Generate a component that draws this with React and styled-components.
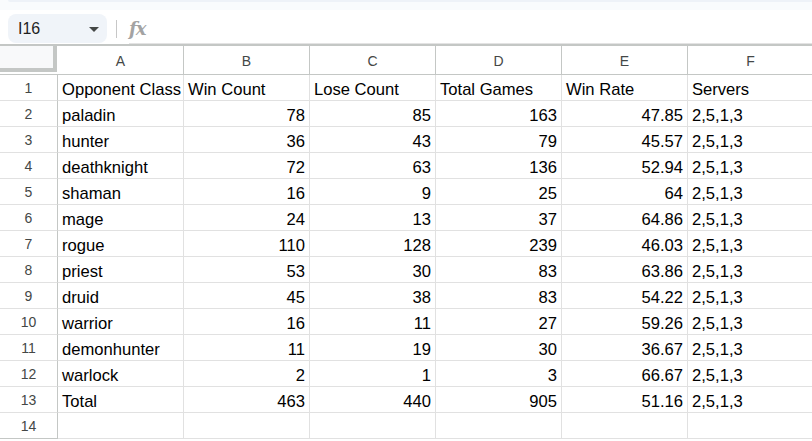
import { Fragment } from "react";
import styled, { createGlobalStyle } from "styled-components";

const GlobalStyle = createGlobalStyle`
  html, body {
    margin: 0;
    padding: 0;
    background: #ffffff;
    overflow: hidden;
  }
  body {
    font-family: "Liberation Sans", Arial, sans-serif;
  }
`;

const Page = styled.div`
  width: 812px;
  height: 441px;
  overflow: hidden;
  background: #ffffff;
  display: flex;
  flex-direction: column;
`;

const TopStrip = styled.div`
  height: 10px;
  background: #f9fbfd;
  padding-left: 8px;
  flex-shrink: 0;
`;

const ToolbarEdge = styled.div`
  height: 2px;
  background: #eef2f8;
  border-bottom-left-radius: 6px;
`;

const FormulaBar = styled.div`
  height: 34px;
  display: flex;
  align-items: flex-start;
  padding-top: 4px;
  box-sizing: border-box;
  flex-shrink: 0;
`;

const NameBox = styled.div`
  margin-left: 8px;
  width: 99px;
  height: 29px;
  border-radius: 8px;
  background: #f0f4f9;
  display: flex;
  align-items: center;
  justify-content: space-between;
  padding: 0 8px 0 10px;
  box-sizing: border-box;
  font-size: 16px;
  color: #1f1f1f;
`;

const Caret = styled.span`
  width: 0;
  height: 0;
  border-left: 5px solid transparent;
  border-right: 5px solid transparent;
  border-top: 5px solid #444746;
  margin-top: 2px;
`;

const Divider = styled.div`
  width: 1px;
  height: 18px;
  background: #c7c7c7;
  margin: 6px 12px 0 9px;
`;

const FxArea = styled.div`
  flex: 1;
  height: 29px;
  border-bottom: 1px solid #e3e3e3;
  display: flex;
  align-items: center;
`;

const Fx = styled.span`
  font-family: "DejaVu Serif", "Liberation Serif", serif;
  font-style: italic;
  font-weight: bold;
  font-size: 18px;
  color: #a3a3a3;
  letter-spacing: -1px;
  margin-top: -1px;
`;

const HeaderLine = styled.div`
  height: 2px;
  background: #c4c7c5;
  flex-shrink: 0;
`;

const Grid = styled.div`
  display: grid;
  grid-template-columns: 58px repeat(6, 126px);
  grid-template-rows: 29px;
  grid-auto-rows: 26px;
`;

const Corner = styled.div`
  box-sizing: border-box;
  border-bottom: 1px solid #c4c7c5;
  padding: 0 1px 2px 0;
`;

const CornerFill = styled.div`
  height: 100%;
  background: #f8f9fa;
  border-right: 4px solid #c4c7c5;
  border-bottom: 4px solid #c4c7c5;
  box-sizing: border-box;
`;

const ColHead = styled.div`
  box-sizing: border-box;
  border-right: 1px solid #c4c7c5;
  border-bottom: 1px solid #c4c7c5;
  display: flex;
  align-items: center;
  justify-content: center;
  font-size: 14px;
  color: #444746;
  padding-top: 1px;
`;

const RowHead = styled.div`
  box-sizing: border-box;
  border-right: 1px solid #c4c7c5;
  border-bottom: 1px solid ${(p) => (p.$last ? "#c4c7c5" : "#e1e1e1")};
  display: flex;
  align-items: center;
  justify-content: center;
  font-size: 14px;
  color: #444746;
  padding-top: 1px;
`;

const Cell = styled.div`
  box-sizing: border-box;
  border-right: 1px solid #e1e1e1;
  border-bottom: 1px solid #e1e1e1;
  display: flex;
  align-items: flex-end;
  justify-content: ${(p) => (p.$num ? "flex-end" : "flex-start")};
  padding: 0 4px 1px 4px;
  font-size: 16.6px;
  line-height: 19px;
  color: #000000;
  white-space: nowrap;
  overflow: hidden;
`;

const columns = ["A", "B", "C", "D", "E", "F"];

const rows = [
  ["Opponent Class", "Win Count", "Lose Count", "Total Games", "Win Rate", "Servers"],
  ["paladin", 78, 85, 163, 47.85, "2,5,1,3"],
  ["hunter", 36, 43, 79, 45.57, "2,5,1,3"],
  ["deathknight", 72, 63, 136, 52.94, "2,5,1,3"],
  ["shaman", 16, 9, 25, 64, "2,5,1,3"],
  ["mage", 24, 13, 37, 64.86, "2,5,1,3"],
  ["rogue", 110, 128, 239, 46.03, "2,5,1,3"],
  ["priest", 53, 30, 83, 63.86, "2,5,1,3"],
  ["druid", 45, 38, 83, 54.22, "2,5,1,3"],
  ["warrior", 16, 11, 27, 59.26, "2,5,1,3"],
  ["demonhunter", 11, 19, 30, 36.67, "2,5,1,3"],
  ["warlock", 2, 1, 3, 66.67, "2,5,1,3"],
  ["Total", 463, 440, 905, 51.16, "2,5,1,3"],
  ["", "", "", "", "", ""],
];

function App() {
  return (
    <>
      <GlobalStyle />
      <Page>
        <TopStrip>
          <ToolbarEdge />
        </TopStrip>
        <FormulaBar>
          <NameBox>
            <span>I16</span>
            <Caret />
          </NameBox>
          <Divider />
          <FxArea>
            <Fx>fx</Fx>
          </FxArea>
        </FormulaBar>
        <HeaderLine />
        <Grid>
          <Corner>
            <CornerFill />
          </Corner>
          {columns.map((c) => (
            <ColHead key={c}>{c}</ColHead>
          ))}
          {rows.map((row, i) => (
            <Fragment key={"r" + i}>
              <RowHead $last={i === rows.length - 1}>{i + 1}</RowHead>
              {row.map((v, j) => (
                <Cell key={j} $num={typeof v === "number"}>
                  {v}
                </Cell>
              ))}
            </Fragment>
          ))}
        </Grid>
      </Page>
    </>
  );
}

export default App;
